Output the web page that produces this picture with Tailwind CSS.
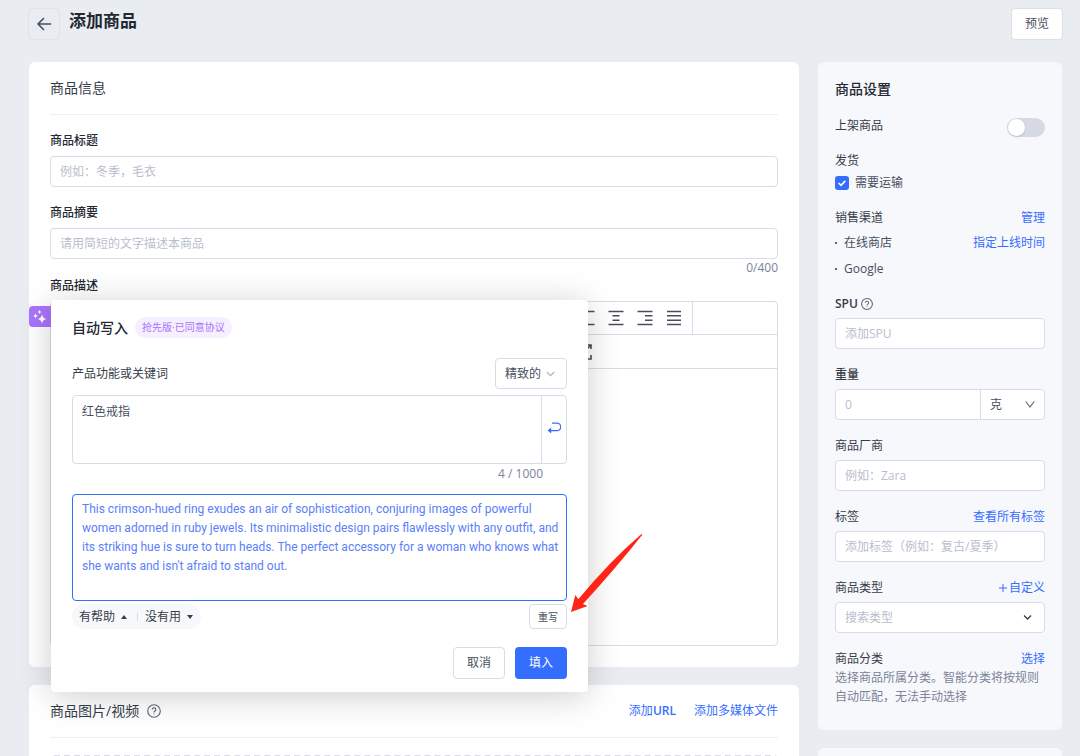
<!DOCTYPE html>
<html lang="zh-CN">
<head>
<meta charset="utf-8">
<meta name="viewport" content="width=device-width, initial-scale=1">
<title>添加商品</title>
<script src="https://cdn.jsdelivr.net/npm/@tailwindcss/browser@4"></script>
</head>
<body class="h-screen overflow-hidden bg-[#e9edf1] font-['Open_Sans','Noto_Sans_CJK_SC',sans-serif] text-xs leading-[18px] text-[#474f5e]">

<header class="flex items-start pt-2 pr-[17px] pl-7">
  <button type="button" aria-label="返回" class="flex size-8 items-center justify-center rounded-sm border border-[#dfe2e8]">
    <svg class="size-4" viewBox="0 0 16 16" fill="none" stroke="#474f5e" stroke-width="1.6" stroke-linecap="round" stroke-linejoin="round"><path d="M14.5 8H2M7.500 2.500L2 8l5.500 5.500"/></svg>
  </button>
  <h1 class="ml-[9px] text-[17px] leading-[26px] font-bold text-[#242833]">添加商品</h1>
  <button type="button" class="ml-auto h-8 w-[52px] rounded-sm border border-[#dcdfe8] bg-white">预览</button>
</header>

<div class="mt-[22px] flex items-start gap-[19px] pr-[18px] pl-[29px]">
  <main class="min-w-0 flex-1">
    <section class="rounded-md bg-white px-[21px] pb-[21px]">
      <h2 class="border-b border-[#eef0f5] py-4 text-sm leading-5 text-[#363c49]">商品信息</h2>

      <label for="title" class="mt-[17px] mb-1.5 block font-medium text-[#242833]">商品标题</label>
      <input id="title" type="text" placeholder="例如：冬季，毛衣" class="block h-[31px] w-full rounded-sm border border-[#d9dce8] bg-white px-[9px] placeholder:text-[#b8becc]">

      <label for="summary" class="mt-[17px] mb-1.5 block font-medium text-[#242833]">商品摘要</label>
      <input id="summary" type="text" placeholder="请用简短的文字描述本商品" class="block h-[31px] w-full rounded-sm border border-[#d9dce8] bg-white px-[9px] placeholder:text-[#b8becc]">
      <p class="text-right text-[#7a8499]">0/400</p>

      <h3 class="mb-1.5 font-medium text-[#242833]">商品描述</h3>
      <div class="relative h-[345px] rounded-sm border border-[#d9dce8]">
        <div class="flex h-[33px] border-b border-[#d9dce8]">
          <div class="flex flex-1 items-center justify-end gap-[13px] border-r border-[#d9dce8] pr-[10px]">
            <button type="button" aria-label="左对齐"><svg class="size-4" viewBox="0 0 16 16" fill="none" stroke="#474f5e" stroke-width="1.5"><path d="M.5 1.500h15M.500 5.800h7M.500 10.200h7M.500 14.500h15"/></svg></button>
            <button type="button" aria-label="居中"><svg class="size-4" viewBox="0 0 16 16" fill="none" stroke="#474f5e" stroke-width="1.500"><path d="M.500 1.500h15M4.500 5.800h7M4.500 10.200h7M.500 14.500h15"/></svg></button>
            <button type="button" aria-label="右对齐"><svg class="size-4" viewBox="0 0 16 16" fill="none" stroke="#474f5e" stroke-width="1.500"><path d="M.500 1.500h15M8 5.800h7.500M8 10.200h7.500M.500 14.500h15"/></svg></button>
            <button type="button" aria-label="两端对齐"><svg class="size-4" viewBox="0 0 16 16" fill="none" stroke="#474f5e" stroke-width="1.500"><path d="M1 1.500h14M1 5.800h14M1 10.200h14M1 14.500h14"/></svg></button>
          </div>
          <div class="w-[84px]"></div>
        </div>
        <div class="flex h-[34px] items-center justify-end border-b border-[#d9dce8] pr-[185px]">
          <button type="button" aria-label="全屏"><svg class="size-4" viewBox="0 0 16 16" fill="none" stroke="#474f5e" stroke-width="1.600"><path d="M1 5V1h4M11 1h4v4M15 11v4h-4M5 15H1v-4M15 1l-4 4"/></svg></button>
        </div>

        <button type="button" aria-label="自动写入" class="absolute top-1 -left-[22px] flex h-[21px] w-[22px] items-center justify-center rounded-l-sm bg-[#a974fb]">
          <svg class="h-[14px] w-4" viewBox="0 0 16 14" fill="#fff"><path d="M10 4.200q.7 4 4.500 4.800-3.800.7-4.500 4.800-.7-4.100-4.500-4.800Q9.300 8.200 10 4.200zM3.500 3.500q.4 2 2.300 2.400-1.900.4-2.300 2.400-.4-2-2.300-2.400 1.900-.4 2.300-2.400zM7.500 0q.3 1.700 1.900 2-1.600.3-1.900 2-.3-1.700-1.900-2 1.600-.3 1.900-2z"/></svg>
        </button>

        <div role="dialog" aria-labelledby="dlg" class="absolute -top-0.5 left-0 z-10 w-[537px] rounded-sm bg-white px-[21px] pt-[17px] pb-[13px] shadow-[0_4px_34px_rgba(0,0,0,0.2)]">
          <div class="flex items-center gap-[7px]">
            <h3 id="dlg" class="text-sm leading-[21px] font-medium text-[#242833]">自动写入</h3>
            <span class="h-[21px] rounded-full bg-[#f6effe] px-[7px] text-[10px] leading-[21px] text-[#a974fb]">抢先版·已同意协议</span>
          </div>
          <div class="mt-5 flex items-center justify-between">
            <label for="keywords" class="text-[#363c49]">产品功能或关键词</label>
            <div class="relative">
              <select aria-label="语气" class="h-[31px] w-[72px] appearance-none rounded-sm border border-[#d9dce8] bg-white pl-[9px]"><option>精致的</option></select>
              <svg class="pointer-events-none absolute top-[13px] right-3 h-[6px] w-[9px]" viewBox="0 0 9 6" fill="none" stroke="#a9b0c0" stroke-width="1.100"><path d="M.8 1l3.700 3.700L8.200 1"/></svg>
            </div>
          </div>
          <div class="mt-1.5 flex h-[69px] rounded-sm border border-[#d9dce8]">
            <textarea id="keywords" class="flex-1 resize-none px-[9px] py-[7px] outline-none">红色戒指</textarea>
            <button type="button" aria-label="生成" class="flex w-[25px] items-center justify-center border-l border-[#d9dce8] pb-1">
              <svg class="h-3 w-[14px]" viewBox="0 0 14 12" fill="none" stroke="#356dff" stroke-width="1.300"><path d="M5 1.200h5a3.400 3.400 0 0 1 0 7.400H3"/><path d="M4.200 5.400v6.200L.6 8.600z" fill="#356dff" stroke="none"/></svg>
            </button>
          </div>
          <p class="pt-px pr-6 text-right text-[#7a8499]">4 / 1000</p>
          <textarea readonly aria-label="生成结果" class="mt-[11px] block h-[107px] w-full resize-none rounded-sm border border-[#356dff] py-[5px] pr-0 pl-[9px] font-[Roboto,sans-serif] leading-[19px] text-[#5a80fa] outline-none">This crimson-hued ring exudes an air of sophistication, conjuring images of powerful women adorned in ruby jewels. Its minimalistic design pairs flawlessly with any outfit, and its striking hue is sure to turn heads. The perfect accessory for a woman who knows what she wants and isn't afraid to stand out.</textarea>
          <div class="mt-[3px] flex items-center justify-between">
            <div class="flex h-[25px] items-center rounded-full bg-[#f7f8fc] pr-2 pl-[7px] text-[#363c49]">
              <button type="button" class="flex items-center gap-1.5">有帮助<svg class="h-1 w-[6px]" viewBox="0 0 6 4" fill="#363c49"><path d="M3 0l3 4H0z"/></svg></button>
              <span class="mr-[7px] ml-[10px] h-2 w-px bg-[#d9dce8]"></span>
              <button type="button" class="flex items-center gap-1.5">没有用<svg class="h-1 w-[6px]" viewBox="0 0 6 4" fill="#363c49"><path d="M3 4L0 0h6z"/></svg></button>
            </div>
            <button type="button" class="h-[25px] w-[38px] rounded-sm border border-[#d9dce8] text-[10px]">重写</button>
          </div>
          <div class="mt-[18px] flex justify-end gap-[10px]">
            <button type="button" class="h-8 w-[52px] rounded-sm border border-[#d9dce8]">取消</button>
            <button type="button" class="h-8 w-[52px] rounded-sm bg-[#356dff] text-white">填入</button>
          </div>
          <svg class="pointer-events-none absolute top-[233px] left-[520px] h-20 w-[72px]" viewBox="0 0 72 80" fill="#ff2413"><path d="M0 79L4.300 62l3 4.300Q38 29 70.500 1l.8.8Q45 35 12 71l4.600 2z"/></svg>
        </div>
      </div>
    </section>

    <section class="mt-[18px] rounded-md bg-white px-[21px]">
      <div class="flex items-center border-b border-[#eef0f5] py-4">
        <h2 class="text-sm leading-5 text-[#363c49]">商品图片/视频</h2>
        <svg class="ml-2 size-[14px]" viewBox="0 0 14 14" fill="none" stroke="#5c6473" stroke-width="1.100"><circle cx="7" cy="7" r="6.300"/><path d="M5.200 5.500a1.800 1.800 0 1 1 2.700 1.600Q7 7.600 7 8.400M7 9.500v1.100"/></svg>
        <a href="#" class="ml-auto text-[#356dff]">添加<span class="font-semibold">URL</span></a>
        <a href="#" class="ml-[18px] text-[#356dff]">添加多媒体文件</a>
      </div>
      <div class="mt-[17px] h-40 rounded-sm border-2 border-dashed border-[#d9dce8]"></div>
    </section>
  </main>

  <aside class="w-[244px] shrink-0">
    <section class="rounded-md bg-[#f7f8fc] px-[17px] pt-[17px] pb-6">
      <h2 class="text-sm leading-5 font-medium text-[#242833]">商品设置</h2>
      <div class="mt-[18px] flex h-5 items-start justify-between">
        <label for="publish" class="text-[#363c49]">上架商品</label>
        <input id="publish" type="checkbox" role="switch" class="mt-px h-[19px] w-[38px] appearance-none rounded-full bg-[#d6dae7] before:mt-px before:ml-px before:block before:size-[17px] before:rounded-full before:bg-white before:shadow-sm">
      </div>
      <h3 class="mt-[15px] text-[#363c49]">发货</h3>
      <label class="mt-1 flex items-center gap-1.5">
        <span class="relative flex">
          <input type="checkbox" checked class="size-[14px] appearance-none rounded-[3px] bg-[#356dff]">
          <svg class="pointer-events-none absolute inset-0 size-[14px]" viewBox="0 0 14 14" fill="none" stroke="#fff" stroke-width="1.600"><path d="M3.600 7l2.400 2.400 4.300-4.500"/></svg>
        </span>需要运输
      </label>
      <div class="mt-[17px] flex justify-between"><h3 class="text-[#363c49]">销售渠道</h3><a href="#" class="text-[#356dff]">管理</a></div>
      <div class="mt-[7px] flex items-center"><span class="mr-[7px] size-0.5 bg-[#5c6473]"></span><span>在线商店</span><a href="#" class="ml-auto text-[#356dff]">指定上线时间</a></div>
      <div class="mt-2 flex items-center"><span class="mr-[7px] size-0.5 bg-[#5c6473]"></span><span>Google</span></div>

      <div class="mt-[17px] mb-[5px] flex items-center gap-[3px] text-[#363c49]"><label for="spu" class="font-semibold">SPU</label>
        <svg class="size-3" viewBox="0 0 14 14" fill="none" stroke="#5c6473" stroke-width="1.200"><circle cx="7" cy="7" r="6.300"/><path d="M5.200 5.500a1.800 1.800 0 1 1 2.700 1.600Q7 7.600 7 8.400M7 9.500v1.100"/></svg>
      </div>
      <input id="spu" type="text" placeholder="添加SPU" class="block h-[31px] w-full rounded-sm border border-[#d9dce8] bg-white px-[9px] placeholder:text-[#b8becc]">

      <label for="weight" class="mt-[17px] mb-[5px] block font-medium text-[#363c49]">重量</label>
      <div class="flex h-[31px] rounded-sm border border-[#d9dce8] bg-white">
        <input id="weight" type="text" placeholder="0" class="min-w-0 flex-1 px-[9px] placeholder:text-[#b8becc]">
        <div class="relative flex w-16 border-l border-[#d9dce8]">
          <select aria-label="单位" class="w-full appearance-none pl-[9px]"><option>克</option></select>
          <svg class="pointer-events-none absolute top-[11px] right-[9px] h-[7px] w-[10px]" viewBox="0 0 10 7" fill="none" stroke="#5c6473" stroke-width="1.100"><path d="M.8.500L5 6 9.200.500"/></svg>
        </div>
      </div>

      <label for="vendor" class="mt-[17px] mb-[5px] block text-[#363c49]">商品厂商</label>
      <input id="vendor" type="text" placeholder="例如：Zara" class="block h-[31px] w-full rounded-sm border border-[#d9dce8] bg-white px-[9px] placeholder:text-[#b8becc]">

      <div class="mt-[17px] mb-[5px] flex justify-between text-[#363c49]"><label for="tags">标签</label><a href="#" class="text-[#356dff]">查看所有标签</a></div>
      <input id="tags" type="text" placeholder="添加标签（例如：复古/夏季）" class="block h-[31px] w-full rounded-sm border border-[#d9dce8] bg-white px-[9px] placeholder:text-[#b8becc]">

      <div class="mt-[17px] mb-[5px] flex justify-between text-[#363c49]"><label for="kind">商品类型</label>
        <a href="#" class="flex items-center gap-0.5 text-[#356dff]"><svg class="size-2" viewBox="0 0 8 8" stroke="#356dff" stroke-width="1"><path d="M4 0v8M0 4h8"/></svg>自定义</a>
      </div>
      <div class="relative">
        <input id="kind" type="text" role="combobox" aria-expanded="false" placeholder="搜索类型" class="block h-[31px] w-full rounded-sm border border-[#d9dce8] bg-white px-[9px] placeholder:text-[#b8becc]">
        <svg class="pointer-events-none absolute top-3 right-[13px] h-[7px] w-[9px]" viewBox="0 0 9 7" fill="none" stroke="#363c49" stroke-width="1.300"><path d="M1 1.500L4.500 5 8 1.500"/></svg>
      </div>

      <div class="mt-[17px] flex justify-between text-[#363c49]"><h3>商品分类</h3><a href="#" class="text-[#356dff]">选择</a></div>
      <p class="leading-[19px] text-[#7a8499]">选择商品所属分类。智能分类将按规则自动匹配，无法手动选择</p>
    </section>
    <section class="mt-[18px] h-40 rounded-md bg-[#f7f8fc]"></section>
  </aside>
</div>
</body>
</html>
